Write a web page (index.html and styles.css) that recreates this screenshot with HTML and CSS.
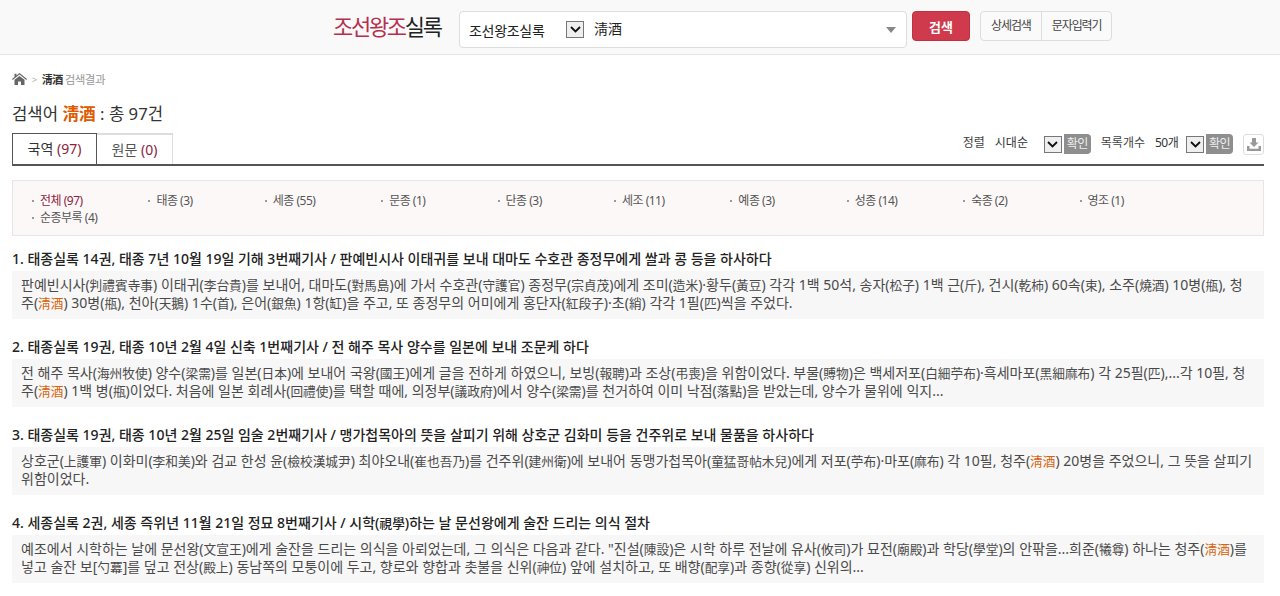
FILE: index.html
```html
<!DOCTYPE html>
<html lang="ko">
<head>
    <meta charset="UTF-8">
    <title>조선왕조실록 검색결과</title>
    <link rel="stylesheet" href="styles.css">
</head>
<body>

<div class="header">
    <div class="logo"><span class="logo-red">조선왕조</span>실록</div>
    <div class="search-box">
        <span class="search-scope">조선왕조실록</span>
        <span class="select-arrow"><svg width="11" height="7" viewBox="0 0 11 7"><path d="M1 1l4.500 4.500L10 1" fill="none" stroke="#111" stroke-width="1.800"/></svg></span>
        <span class="search-word">淸酒</span>
        <span class="search-caret"></span>
    </div>
    <button class="search-btn">검색</button>
    <div class="btn-group">
        <a class="btn-item">상세검색</a>
        <a class="btn-item">문자입력기</a>
    </div>
</div>

<div class="content">
    <div class="breadcrumb">
        <svg class="home-icon" width="15" height="12" viewBox="0 0 15 12"><path d="M7.500 0L15 6l-.7.900L7.500 1.600.7 6.900 0 6l2.500-2V.8h2v1.600zM2.500 6.800l5-3.900 5 3.900V12H9V8.500H6V12H2.500z" fill="#666"/></svg>
        <span class="crumb-sep">&gt;</span>
        <b class="crumb-word">淸酒</b>
        <span class="crumb-text">검색결과</span>
    </div>

    <h2 class="result-title">검색어 <b>淸酒</b> : 총 97건</h2>

    <div class="tab-bar">
        <a class="tab tab-on">국역 <em>(97)</em></a>
        <a class="tab">원문 <em>(0)</em></a>
        <div class="tools">
            <span class="tool-label">정렬</span>
            <div class="tool-select sort-select"><span>시대순</span><span class="select-arrow"><svg width="11" height="7" viewBox="0 0 11 7"><path d="M1 1l4.500 4.500L10 1" fill="none" stroke="#111" stroke-width="1.800"/></svg></span><a class="tool-ok">확인</a></div>
            <span class="tool-label count-label">목록개수</span>
            <div class="tool-select count-select"><span>50개</span><span class="select-arrow"><svg width="11" height="7" viewBox="0 0 11 7"><path d="M1 1l4.500 4.500L10 1" fill="none" stroke="#111" stroke-width="1.800"/></svg></span><a class="tool-ok">확인</a></div>
            <a class="download"><svg width="14" height="13" viewBox="0 0 14 13"><path d="M5 0h4v4.500h2.500L7 9 2.500 4.500H5zM0 8h2.500v2.800h9V8H14v5H0z" fill="#999"/></svg></a>
        </div>
    </div>

    <ul class="king-list">
        <li class="king-on">전체 (97)</li>
        <li>태종 (3)</li>
        <li>세종 (55)</li>
        <li>문종 (1)</li>
        <li>단종 (3)</li>
        <li>세조 (11)</li>
        <li>예종 (3)</li>
        <li>성종 (14)</li>
        <li>숙종 (2)</li>
        <li>영조 (1)</li>
        <li>순종부록 (4)</li>
    </ul>

    <div class="result">
        <h3>1. 태종실록 14권, 태종 7년 10월 19일 기해 3번째기사 / 판예빈시사 이태귀를 보내 대마도 수호관 종정무에게 쌀과 콩 등을 하사하다</h3>
        <p>판예빈시사(<span class="hj">判禮賓寺事</span>) 이태귀(<span class="hj">李台貴</span>)를 보내어, 대마도(<span class="hj">對馬島</span>)에 가서 수호관(<span class="hj">守護官</span>) 종정무(<span class="hj">宗貞茂</span>)에게 조미(<span class="hj">造米</span>)·황두(<span class="hj">黃豆</span>) 각각 1백 50석, 송자(<span class="hj">松子</span>) 1백 근(<span class="hj">斤</span>), 건시(<span class="hj">乾柿</span>) 60속(<span class="hj">束</span>), 소주(<span class="hj">燒酒</span>) 10병(<span class="hj">甁</span>), 청<br>주(<mark>淸酒</mark>) 30병(<span class="hj">甁</span>), 천아(<span class="hj">天鵝</span>) 1수(<span class="hj">首</span>), 은어(<span class="hj">銀魚</span>) 1항(<span class="hj">缸</span>)을 주고, 또 종정무의 어미에게 홍단자(<span class="hj">紅段子</span>)·초(<span class="hj">綃</span>) 각각 1필(<span class="hj">匹</span>)씩을 주었다.</p>
    </div>
    <div class="result">
        <h3>2. 태종실록 19권, 태종 10년 2월 4일 신축 1번째기사 / 전 해주 목사 양수를 일본에 보내 조문케 하다</h3>
        <p>전 해주 목사(<span class="hj">海州牧使</span>) 양수(<span class="hj">梁需</span>)를 일본(<span class="hj">日本</span>)에 보내어 국왕(<span class="hj">國王</span>)에게 글을 전하게 하였으니, 보빙(<span class="hj">報聘</span>)과 조상(<span class="hj">弔喪</span>)을 위함이었다. 부물(<span class="hj">賻物</span>)은 백세저포(<span class="hj">白細苧布</span>)·흑세마포(<span class="hj">黑細麻布</span>) 각 25필(<span class="hj">匹</span>),...각 10필, 청<br>주(<mark>淸酒</mark>) 1백 병(<span class="hj">甁</span>)이었다. 처음에 일본 회례사(<span class="hj">回禮使</span>)를 택할 때에, 의정부(<span class="hj">議政府</span>)에서 양수(<span class="hj">梁需</span>)를 천거하여 이미 낙점(<span class="hj">落點</span>)을 받았는데, 양수가 물위에 익지...</p>
    </div>
    <div class="result">
        <h3>3. 태종실록 19권, 태종 10년 2월 25일 임술 2번째기사 / 맹가첩목아의 뜻을 살피기 위해 상호군 김화미 등을 건주위로 보내 물품을 하사하다</h3>
        <p>상호군(<span class="hj">上護軍</span>) 이화미(<span class="hj">李和美</span>)와 검교 한성 윤(<span class="hj">檢校漢城尹</span>) 최야오내(<span class="hj">崔也吾乃</span>)를 건주위(<span class="hj">建州衛</span>)에 보내어 동맹가첩목아(<span class="hj">童猛哥帖木兒</span>)에게 저포(<span class="hj">苧布</span>)·마포(<span class="hj">麻布</span>) 각 10필, 청주(<mark>淸酒</mark>) 20병을 주었으니, 그 뜻을 살피기<br>위함이었다.</p>
    </div>
    <div class="result">
        <h3>4. 세종실록 2권, 세종 즉위년 11월 21일 정묘 8번째기사 / 시학(<span class="hj">視學</span>)하는 날 문선왕에게 술잔 드리는 의식 절차</h3>
        <p>예조에서 시학하는 날에 문선왕(<span class="hj">文宣王</span>)에게 술잔을 드리는 의식을 아뢰었는데, 그 의식은 다음과 같다. "진설(<span class="hj">陳設</span>)은 시학 하루 전날에 유사(<span class="hj">攸司</span>)가 묘전(<span class="hj">廟殿</span>)과 학당(<span class="hj">學堂</span>)의 안팎을...희준(<span class="hj">犧尊</span>) 하나는 청주(<mark>淸酒</mark>)를<br>넣고 술잔 보[<span class="hj">勺冪</span>]를 덮고 전상(<span class="hj">殿上</span>) 동남쪽의 모퉁이에 두고, 향로와 향합과 촛불을 신위(<span class="hj">神位</span>) 앞에 설치하고, 또 배향(<span class="hj">配享</span>)과 종향(<span class="hj">從享</span>) 신위의...</p>
    </div>
</div>

</body>
</html>
```

FILE: styles.css
```css
* {
    box-sizing: border-box;
}
body {
    margin: 0;
    font-family: "Noto Sans", "Noto Sans CJK KR", sans-serif;
    font-size: 13px;
    color: #333;
    background: #fff;
    overflow: hidden;
}
.header {
    display: flex;
    align-items: flex-start;
    height: 55px;
    padding: 11px 0 0 333px;
    background: #f9f9f9;
    border-bottom: 1px solid #e6e6e6;
}
.logo {
    width: 126px;
    font-size: 22px;
    line-height: 30px;
    letter-spacing: -2.300px;
    color: #222;
}
.logo-red {
    color: #b5304e;
}
.search-box {
    display: flex;
    align-items: center;
    width: 448px;
    height: 37px;
    padding-left: 9px;
    background: #fff;
    border: 1px solid #ddd;
    border-radius: 4px;
    color: #222;
}
.search-scope {
    width: 97px;
    font-size: 14px;
    letter-spacing: -.3px;
}
.select-arrow {
    display: inline-flex;
    align-items: center;
    justify-content: center;
    width: 18px;
    height: 17px;
    background: #efefef;
    border: 1px solid #777;
}
.search-word {
    margin: -4px 0 0 10px;
    font-size: 14px;
    flex: 1;
}
.search-caret {
    width: 0;
    height: 0;
    margin-right: 10px;
    border: 5px solid transparent;
    border-top: 6px solid #888;
    border-bottom: 0;
}
.search-btn {
    width: 58px;
    height: 30px;
    margin-left: 5px;
    padding: 0;
    font-family: inherit;
    font-size: 13px;
    font-weight: 700;
    color: #fff;
    background: #cf3a4c;
    border: 1px solid #bd3142;
    border-radius: 4px;
}
.btn-group {
    display: flex;
    height: 30px;
    margin-left: 10px;
    background: #fafafa;
    border: 1px solid #ddd;
    border-radius: 4px;
}
.btn-item {
    padding: 0 10px;
    font-size: 12px;
    line-height: 27px;
    letter-spacing: -1.100px;
    color: #444;
}
.btn-item + .btn-item {
    border-left: 1px solid #ddd;
}
.content {
    padding: 0 16px 0 12px;
}
.breadcrumb {
    display: flex;
    align-items: center;
    height: 18px;
    margin-top: 15px;
    font-size: 11px;
    letter-spacing: -.5px;
    color: #999;
}
.crumb-sep {
    margin: 0 5px;
    font-size: 9px;
    color: #aaa;
}
.crumb-word {
    margin-right: 2px;
    color: #333;
}
.crumb-text {
    font-size: 11.500px;
}
.result-title {
    margin: 14px 0 0;
    font-size: 16.700px;
    font-weight: 400;
    line-height: 24px;
    color: #333;
}
.result-title b {
    color: #e05a00;
}
.tab-bar {
    display: flex;
    align-items: flex-end;
    height: 33px;
    margin-top: 7px;
    border-bottom: 2px solid #555;
}
.tab {
    width: 76px;
    height: 31px;
    font-size: 14px;
    line-height: 30px;
    text-align: center;
    color: #555;
    border: 1px solid #ddd;
    border-width: 2px 1px 0 0;
}
.tab em {
    font-style: normal;
    color: #8c2240;
}
.tab-on {
    width: 85px;
    color: #333;
    border: 1px solid #555;
    border-width: 1px 1px 0 1px;
}
.tools {
    display: flex;
    align-items: center;
    height: 31px;
    margin-left: auto;
    padding-bottom: 9px;
    font-size: 12px;
    line-height: 18px;
    color: #444;
}
.tool-label {
    margin-top: -2px;
}
.tool-select {
    display: flex;
    align-items: center;
    height: 20px;
    margin-left: 7px;
    color: #333;
    background: #fff;
}
.sort-select > span:first-child {
    width: 52px;
    margin-top: -2px;
    padding-left: 3px;
}
.count-select > span:first-child {
    width: 34px;
    margin-top: -2px;
    padding-left: 3px;
    letter-spacing: -.5px;
}
.tool-ok {
    width: 27px;
    height: 20px;
    margin-left: 2px;
    font-size: 12px;
    line-height: 19px;
    text-align: center;
    letter-spacing: -.5px;
    color: #eee;
    background: #8e8e8e;
    border-radius: 0 4px 4px 0;
}
.count-label {
    margin-left: 10px;
}
.download {
    display: flex;
    align-items: center;
    justify-content: center;
    width: 21px;
    height: 21px;
    margin-left: 10px;
    border: 1px solid #ddd;
    border-radius: 3px;
}
.king-list {
    display: flex;
    flex-wrap: wrap;
    align-content: flex-start;
    height: 56px;
    margin: 14px 0 0;
    padding: 11px 0 0 19px;
    list-style: none;
    font-size: 12px;
    line-height: 17px;
    letter-spacing: -.5px;
    color: #555;
    background: #fdf8f8;
    border: 1px solid #e6e6e6;
}
.king-list li {
    width: 116.400px;
    height: 17px;
    padding-left: 8px;
    position: relative;
}
.king-list li::before {
    content: "";
    position: absolute;
    left: 0;
    top: 8px;
    width: 2px;
    height: 2px;
    background: #999;
}
.king-list .king-on {
    color: #8c2240;
}
.result {
    height: 88px;
}
.king-list + .result {
    margin-top: 12px;
}
.result h3 {
    margin: 0;
    font-size: 14px;
    font-weight: 500;
    line-height: 22px;
    color: #222;
}
.result p {
    height: 48px;
    margin: 1px 0 0;
    padding: 5px 0 0 9px;
    font-size: 14px;
    line-height: 18px;
    color: #4a4a4a;
    background: #f7f7f7;
    white-space: nowrap;
}
.hj, mark {
    font-size: 12.700px;
}
mark {
    color: #d9620a;
    background: none;
}
```
